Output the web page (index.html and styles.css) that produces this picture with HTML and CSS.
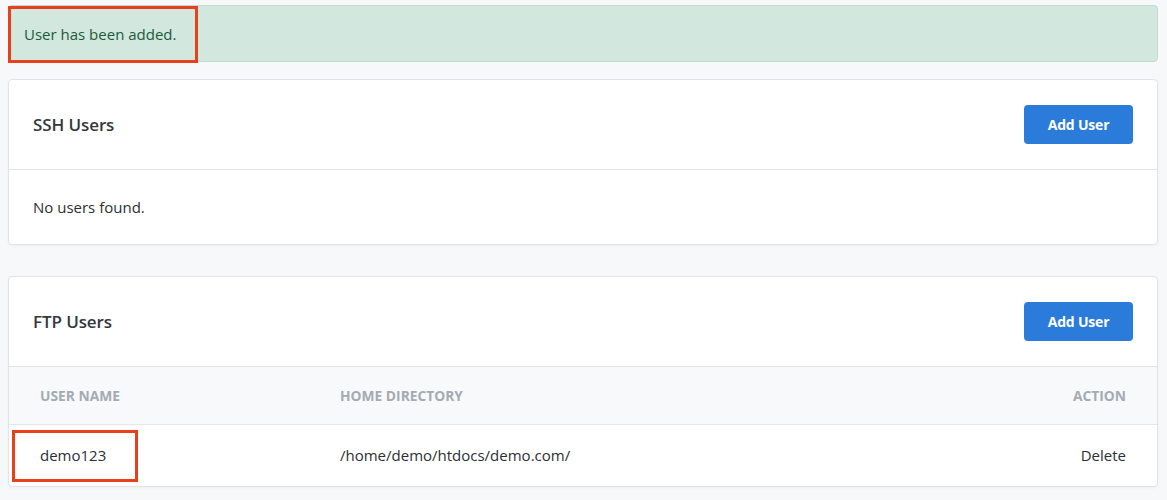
FILE: index.html
```html
<!DOCTYPE html>
<html lang="en">
<head>
<meta charset="utf-8">
<title>Users</title>
<link rel="stylesheet" href="styles.css">
</head>
<body>
<div class="page">
  <div class="alert">
    <span class="alert-text">User has been added.</span>
    <span class="mark mark-alert"></span>
  </div>

  <section class="card">
    <div class="card-header">
      <h2 class="card-title">SSH Users</h2>
      <button class="btn">Add User</button>
    </div>
    <div class="card-body">No users found.</div>
  </section>

  <section class="card card-ftp">
    <div class="card-header">
      <h2 class="card-title">FTP Users</h2>
      <button class="btn">Add User</button>
    </div>
    <table class="table">
      <thead>
        <tr>
          <th class="col-user">User Name</th>
          <th class="col-home">Home Directory</th>
          <th class="col-action">Action</th>
        </tr>
      </thead>
      <tbody>
        <tr>
          <td class="col-user"><span class="cell-user">demo123<span class="mark mark-user"></span></span></td>
          <td class="col-home">/home/demo/htdocs/demo.com/</td>
          <td class="col-action">Delete</td>
        </tr>
      </tbody>
    </table>
  </section>
</div>
</body>
</html>
```
FILE: styles.css
```css
* { box-sizing: border-box; }
html, body { margin: 0; padding: 0; }
body {
  background: #f7f8fa;
  font-family: "Open Sans", "Noto Sans", sans-serif;
  color: #2b2f33;
  width: 1167px;
  height: 500px;
  overflow: hidden;
}
.page {
  padding: 5px 9px 0 8px;
}
.alert {
  position: relative;
  height: 57px;
  background: #d2e7dd;
  border: 1px solid #c0ddd0;
  border-radius: 4px;
  color: #1b5a3c;
  font-size: 15px;
  line-height: 24px;
  padding: 16px 15px 14px;
  margin-bottom: 17px;
}
.mark {
  position: absolute;
  border: 3px solid #e8401c;
  pointer-events: none;
}
.mark-alert {
  left: -1px;
  top: 0;
  width: 190px;
  height: 57px;
}
.card {
  background: #fff;
  border: 1px solid #e1e4e7;
  border-radius: 4px;
  box-shadow: 0 1px 3px rgba(0,0,0,0.04);
  margin-bottom: 31px;
}
.card-header {
  display: flex;
  align-items: center;
  justify-content: space-between;
  padding: 25px 24px 25px 24px;
  border-bottom: 1px solid #e1e4e7;
}
.card-title {
  margin: 0;
  font-size: 17px;
  font-weight: 600;
  color: #33373b;
  letter-spacing: -0.1px;
}
.btn {
  font-family: inherit;
  height: 39px;
  width: 109px;
  background: #2b7bdb;
  color: #fff;
  border: 0;
  border-radius: 4px;
  font-size: 14px;
  font-weight: 700;
  letter-spacing: -0.2px;
  padding: 0;
}
.card-body {
  padding: 25px 24px;
  font-size: 15px;
  line-height: 24px;
  color: #2b2f33;
}
.table {
  width: 100%;
  border-collapse: collapse;
}
.table th {
  background: #f8f9fa;
  height: 57px;
  font-size: 13.8px;
  font-weight: 700;
  color: #a3abb3;
  text-transform: uppercase;
  text-align: left;
  border-bottom: 1px solid #e4e7ea;
  padding: 0 31px;
}
.table td {
  height: 62px;
  font-size: 15px;
  color: #2b2f33;
  padding: 0 31px;
}
.col-user { width: 331px; }
.table th.col-home, .table td.col-home { padding-left: 0; }
.table .col-action { text-align: right; }
.cell-user { position: relative; }
.mark-user {
  left: -28px;
  top: -15px;
  width: 126px;
  height: 52px;
}
```
